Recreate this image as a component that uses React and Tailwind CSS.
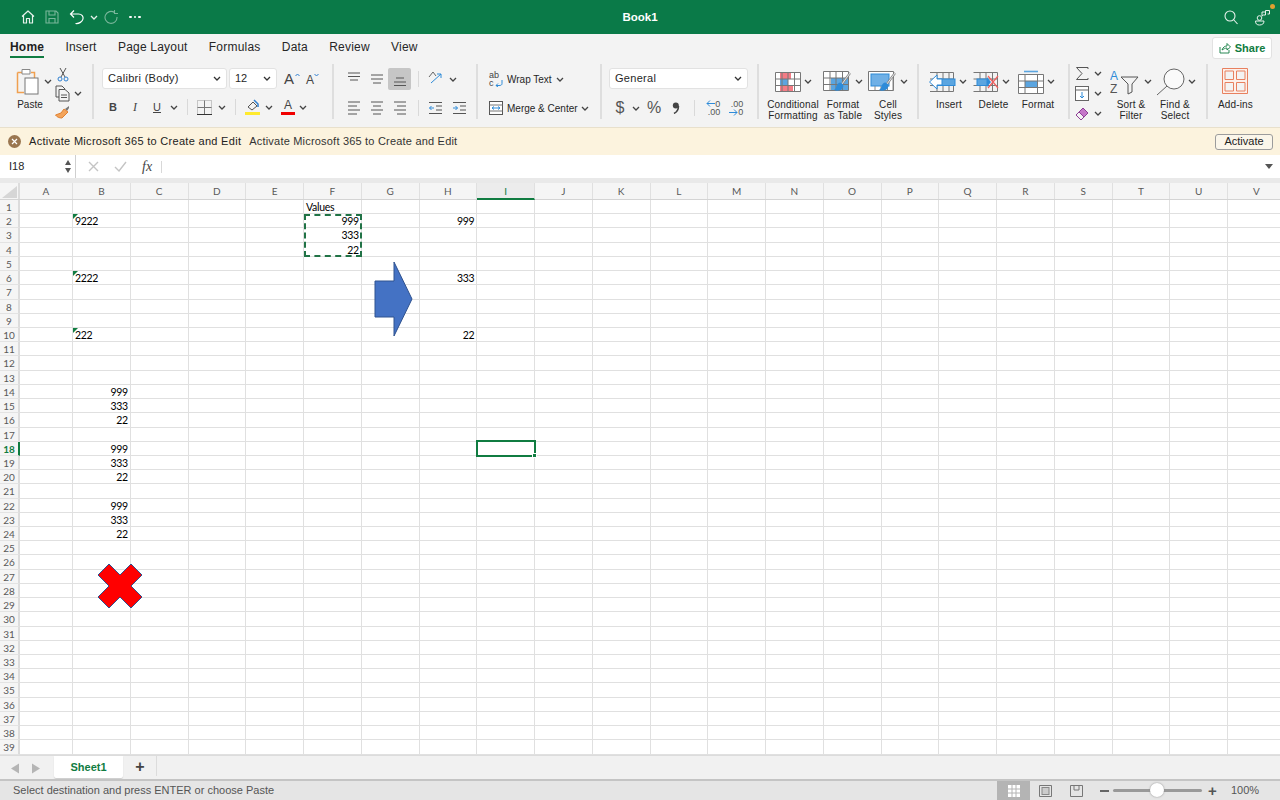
import React from 'react';

const Chev = ({ c = '#444' }) => (
  <svg width="8" height="5" viewBox="0 0 8 5" className="shrink-0"><path d="M1 1l3 3 3-3" fill="none" stroke={c} strokeWidth="1.3" /></svg>
);

const S = ({ w, h, children, className = '' }) => (
  <svg width={w} height={h} viewBox={`0 0 ${w} ${h}`} fill="none" className={`shrink-0 ${className}`}>{children}</svg>
);

const Sep = ({ h = 'h-[22px]' }) => <div className={`w-px ${h} bg-[#d9d9d9] shrink-0`} />;
const GroupSep = () => <div className="w-[2px] h-[55px] mt-[4px] bg-[#dedede] shrink-0" />;

const Lines = ({ kind }) => {
  const rows = {
    top: [[4, 16, 4], [4, 16, 7.5], [6, 14, 11]],
    mid: [[4, 16, 6], [4, 16, 10], [6, 14, 14]],
    bot: [[6, 14, 9], [4, 16, 13], [4, 16, 16.5]],
    left: [[4, 16, 4], [4, 13, 8], [4, 16, 12], [4, 13, 16]],
    center: [[4, 16, 4], [6, 14, 8], [4, 16, 12], [6, 14, 16]],
    right: [[4, 16, 4], [7, 16, 8], [4, 16, 12], [7, 16, 16]],
  }[kind];
  return <S w={20} h={20}>{rows.map((r, i) => <path key={i} d={`M${r[0]} ${r[2]}H${r[1]}`} stroke="#555" strokeWidth="1" />)}</S>;
};

const Big = ({ icon, l1, l2, w, shift = false }) => (
  <div className={`flex flex-col items-center shrink-0 ${w}`}>
    <div className={`h-[33px] flex items-center gap-[3px] ${shift ? 'pr-[4px]' : ''}`}>{icon}<Chev /></div>
    <div className="text-[10px] leading-[11px] text-center text-[#262626] tracking-[0.15px] mt-[1px] whitespace-nowrap">{l1}<br />{l2}</div>
  </div>
);

const TableGrid = ({ children, w = 26, h = 20 }) => (
  <S w={w} h={h}>
    <rect x="0.5" y="0.5" width={w - 1} height={h - 1} fill="#fff" />
    {children}
    <path d={`M0.5 0.5H${w - .5}V${h - .5}H0.5Z M0.5 7H${w - .5} M0.5 13.5H${w - .5} M7 0.5V${h - .5} M13 .5V${h - .5} M19.5 .5V${h - .5}`} stroke="#777" strokeWidth="1" />
  </S>
);

const Brush = () => (
  <g>
    <path d="M27 3L19 14" stroke="#888" strokeWidth="2.2" />
    <path d="M27 3L19 14" stroke="#fff" strokeWidth="0.8" />
    <path d="M18 13c3 1 3 4 1 6s-6 2-8 1c2-1 2-3 3-5s3-3 4-2z" fill="#2e8bd8" />
  </g>
);

const CondIcon = (
  <TableGrid>
    <rect x="5" y="1" width="11" height="6" fill="#f47c85" />
    <rect x="5" y="7" width="8" height="6" fill="#5ba5e0" />
    <rect x="5" y="13" width="13" height="6" fill="#f47c85" />
  </TableGrid>
);
const FmtTable = (
  <S w={29} h={24}>
    <g transform="translate(0,1)">
      <rect x="0.5" y="0.5" width="25" height="19" fill="#fff" />
      <rect x="8" y="7" width="17" height="12" fill="#5ba5e0" />
      <path d="M0.5 0.5H25.5V19.5H0.5Z M0.5 7H25.5 M0.5 13.5H25.5 M7 0.5V19.5 M13 .5V19.5 M19.5 .5V19.5" stroke="#777" />
    </g>
    <Brush />
  </S>
);
const CellStyles = (
  <S w={29} h={24}>
    <g transform="translate(0,1)">
      <rect x="0.5" y="0.5" width="25" height="19" fill="#fff" />
      <rect x="3" y="3" width="18" height="12" fill="#6fb0e6" stroke="#2e8bd8" />
      <path d="M0.5 0.5H25.5V19.5H0.5Z" stroke="#777" />
      <path d="M25 7V19 M7 15V19 M13 15V19 M19.5 15V19" stroke="#888" />
    </g>
    <Brush />
  </S>
);
const InsertIcon = (
  <S w={28} h={20}>
    <path d="M2 .5H25.5V19.5H2 M2 7H25.5 M2 13.5H25.5 M9 .5V19.5 M15 .5V19.5 M21 .5V19.5" stroke="#777" />
    <rect x="9" y="7" width="18" height="6.5" fill="#5ba5e0" stroke="#2e8bd8" />
    <path d="M9 3L1.5 10 9 17V13H14V7H9Z" fill="#fff" stroke="#2e8bd8" />
  </S>
);
const DeleteIcon = (
  <S w={26} h={20}>
    <path d="M.5 .5H24.5V19.5H.5 M.5 7H24.5 M.5 13.5H24.5 M7 .5V19.5 M13 .5V19.5 M19.5 .5V19.5" stroke="#777" />
    <rect x="4" y="7" width="10" height="6.5" fill="#5ba5e0" stroke="#2e8bd8" />
    <path d="M14 5L18 10 14 15Z" fill="#2e8bd8" />
    <path d="M15 4L25 16M25 4L15 16" stroke="#f0605f" strokeWidth="1.2" />
  </S>
);
const FormatIcon = (
  <S w={26} h={24}>
    <path d="M6 1.5H20" stroke="#5ba5e0" strokeWidth="1.6" />
    <g transform="translate(0,4)">
      <rect x=".5" y=".5" width="25" height="19" fill="#fff" />
      <rect x="7" y="7" width="13" height="6.5" fill="#5ba5e0" />
      <path d="M.5 .5H25.5V19.5H.5Z M.5 7H25.5 M.5 13.5H25.5 M7 .5V19.5 M19.5 .5V19.5" stroke="#777" />
    </g>
  </S>
);

const cols = 'ABCDEFGHIJKLMNOPQRSTUV'.split('');
const rows = Array.from({ length: 39 }, (_, i) => i + 1);
const data = {
  F1: ['Values', 'l'],
  B2: ['9222', 'l', true], F2: ['999', 'r'], H2: ['999', 'r'],
  F3: ['333', 'r'], F4: ['22', 'r'],
  B6: ['2222', 'l', true], H6: ['333', 'r'],
  B10: ['222', 'l', true], H10: ['22', 'r'],
  B14: ['999', 'r'], B15: ['333', 'r'], B16: ['22', 'r'],
  B18: ['999', 'r'], B19: ['333', 'r'], B20: ['22', 'r'],
  B22: ['999', 'r'], B23: ['333', 'r'], B24: ['22', 'r'],
};

function Cell({ col, row }) {
  const d = data[col + row];
  return (
    <div className={`relative shrink-0 h-full border-r border-b border-[#e0e0e0] ${col === 'A' ? 'w-[53px]' : 'w-[57.75px]'} ${d && d[1] === 'r' ? 'text-right pr-[2px]' : 'text-left pl-[2px]'} text-[10.5px] tracking-[-0.3px] leading-[14px] text-black`}>
      {d && d[2] && <span className="absolute left-0 top-0 w-0 h-0 border-t-[5px] border-r-[5px] border-t-[#107c41] border-r-transparent" />}
      {d && d[0]}
    </div>
  );
}

export default function App() {
  return (
    <div className="w-[1280px] h-[800px] overflow-hidden flex flex-col bg-white text-[#262626] font-['Liberation_Sans',Arial,sans-serif]">
      {/* Title bar */}
      <header className="h-[34px] shrink-0 bg-[#0a7a48] flex items-center text-white">
        <div className="flex-1 flex items-center pl-[20px]">
          <S w={16} h={16}><path d="M2 7.5L8 2l6 5.5M3.5 6.5V14H6.5V9.5H9.5V14H12.5V6.5" stroke="#e6f2ec" strokeWidth="1.2" strokeLinejoin="round" /></S>
          <S w={16} h={16} className="ml-[8px] opacity-50"><path d="M2 2H12L14 4V14H2Z M5 2V6H11V2 M5 14V9.5H11V14" stroke="#e6f2ec" strokeWidth="1.1" /></S>
          <S w={16} h={16} className="ml-[9px]"><path d="M5 1.5L1.5 5 5 8.5M1.5 5H9.5C13 5 14.5 7.5 14 10S10 15 6.5 14.5" stroke="#fff" strokeWidth="1.2" /></S>
          <div className="ml-[5px]"><Chev c="#e6f2ec" /></div>
          <S w={14} h={14} className="ml-[6px] opacity-50"><path d="M10.5 2.5A6 6 0 1 0 13 7 M10.5 0V3.5H14" stroke="#e6f2ec" strokeWidth="1.1" /></S>
          <div className="ml-[11px] flex gap-[2px]"><i className="w-[2.5px] h-[2.5px] rounded-full bg-white" /><i className="w-[2.5px] h-[2.5px] rounded-full bg-white" /><i className="w-[2.5px] h-[2.5px] rounded-full bg-white" /></div>
        </div>
        <div className="text-[11.5px] font-bold mt-[1px]">Book1</div>
        <div className="flex-1 flex items-center justify-end pl-[10px] pr-[10px] gap-[17px] relative">
          <S w={14} h={15}><circle cx="6" cy="6" r="5" stroke="#e6f2ec" strokeWidth="1.1" /><path d="M9.5 9.5L13.5 14" stroke="#e6f2ec" strokeWidth="1.1" /></S>
          <S w={15} h={17} className="mt-[1px]"><circle cx="4.5" cy="9" r="2.3" stroke="#e6f2ec" /><path d="M.5 12H9C9 15 7 16 4.5 16S.5 15 .5 12Z M7 7V3H10.5V6H8.5Z M10.5 4.5V1.5H14.5V5H12.5" stroke="#e6f2ec" strokeWidth="1" /></S>
          <span className="absolute right-[5px] -top-[4px] w-[5px] h-[5px] rounded-full bg-[#e0a030]" />
        </div>
      </header>

      {/* Ribbon */}
      <div className="h-[93px] shrink-0 bg-[#f3f3f3] flex flex-col">
        <div className="h-[26px] flex pl-[10px] relative">
          <nav className="flex gap-[21.3px] text-[12px] tracking-[0.2px] pt-[4px]">
            <div className="relative font-bold text-[#1f1f1f] h-[20px] border-b-[2px] border-[#107c41]">Home</div>
            <div>Insert</div><div>Page Layout</div><div>Formulas</div><div>Data</div><div>Review</div><div>View</div>
          </nav>
          <div className="ml-auto mr-[8px] mt-[3px] w-[60px] h-[22px] bg-white rounded-[3px] border border-[#e2e2e2] flex items-center justify-center gap-[4px] text-[#107c41] text-[11px] font-bold">
            <S w={12} h={12}><path d="M1 5V11H10V8 M3 8C4 5 6 4 8 4V1.5L11.5 5 8 8V6C6 6 5 7 3 8Z" stroke="#107c41" strokeWidth="0.9" /></S>
            Share
          </div>
        </div>

        <div className="flex-1 flex items-start pl-[11px]">
          {/* Clipboard */}
          <div className="w-[81px] shrink-0 flex pt-[6px]">
            <div className="w-[40px] flex flex-col items-center">
              <div className="flex items-center gap-[3px] h-[30px] ml-[4px]">
                <S w={27} h={28}>
                  <path d="M3.5 5.5H8M17 5.5H20.5V12M3.5 5.5V25.5H10" stroke="#f0a050" strokeWidth="1.5" />
                  <path d="M8 2.5H16V7H8Z" fill="#fff" stroke="#888" />
                  <rect x="11" y="11" width="13" height="16" fill="#fff" stroke="#777" />
                </S>
                <Chev />
              </div>
              <div className="text-[10px] mt-[1px] -ml-[2px]">Paste</div>
            </div>
            <div className="ml-[4px] flex flex-col gap-[3px] pt-[1px]">
              <S w={12} h={15} className="ml-[2px]"><path d="M3 1L8 10M9 1L4 10" stroke="#555" /><circle cx="3" cy="12" r="2" stroke="#2e7fd0" /><circle cx="9" cy="12" r="2" stroke="#2e7fd0" /></S>
              <div className="flex items-center gap-[4px]">
                <S w={15} h={17}><path d="M4 12H1V1H7L10 4" stroke="#555" /><path d="M4 4.5H10L14 8V16H4Z M6 10H12M6 12.5H12" stroke="#555" fill="#f3f3f3" /></S>
                <Chev />
              </div>
              <S w={15} h={14}><path d="M14 1L10 4 12 6 14 3Z" fill="#777" /><path d="M9 4L13 7 7 13C4 13 2 12 .5 10L6 8Z" fill="#f3a45b" stroke="#e08030" /></S>
            </div>
          </div>
          <GroupSep />

          {/* Font */}
          <div className="w-[238px] shrink-0 pl-[8px] pt-[8px] flex flex-col">
            <div className="flex items-center">
              <div className="w-[125px] h-[21px] bg-white rounded-[3px] border border-[#e2e2e2] flex items-center justify-between px-[5px] text-[11px] tracking-[0.3px]">Calibri (Body)<Chev c="#333" /></div>
              <div className="w-[48px] h-[21px] ml-[2px] bg-white rounded-[3px] border border-[#e2e2e2] flex items-center justify-between px-[5px] text-[11px]">12<Chev c="#333" /></div>
              <div className="ml-[7px] text-[15px] w-[11px] text-[#444] leading-none">A</div>
              <S w={5} h={4} className="-mt-[8px]"><path d="M.5 3L2.5 1 4.5 3" stroke="#2e7fd0" /></S>
              <div className="ml-[6px] text-[12px] text-[#444] mt-[2px] leading-none">A</div>
              <S w={5} h={4} className="-mt-[8px]"><path d="M.5 1L2.5 3 4.5 1" stroke="#2e7fd0" /></S>
            </div>
            <div className="flex items-center h-[22px] mt-[7px] text-[11px] text-[#444]">
              <div className="w-[22px] text-center font-bold">B</div>
              <div className="w-[22px] text-center italic font-['Liberation_Serif',serif] text-[12px]">I</div>
              <div className="w-[22px] text-center underline">U</div>
              <div className="ml-[2px]"><Chev /></div>
              <div className="ml-[9px]"><Sep h="h-[16px]" /></div>
              <S w={15} h={15} className="ml-[9px]"><path d="M.5.5H14.5V14.5H.5Z" stroke="#999" strokeDasharray="1 1" /><path d="M.5 7.5H14.5M7.5.5V14.5" stroke="#777" /><path d="M0 14.5H15" stroke="#333" /></S>
              <div className="ml-[6px]"><Chev /></div>
              <div className="ml-[9px]"><Sep h="h-[16px]" /></div>
              <S w={15} h={16} className="ml-[9px]"><path d="M3 8L8 3 12 7 7 11Z" stroke="#555" /><path d="M9 1L13 5V8" stroke="#2e7fd0" strokeWidth="1.5" /><rect x="0" y="13" width="15" height="3" fill="#ffea2e" /></S>
              <div className="ml-[5px]"><Chev /></div>
              <div className="ml-[8px] w-[14px] h-[16px] relative text-center text-[12px] leading-[12px]">A<span className="absolute left-0 right-0 bottom-0 h-[3px] bg-[#f00000]" /></div>
              <div className="ml-[4px]"><Chev /></div>
            </div>
          </div>
          <GroupSep />

          {/* Alignment */}
          <div className="w-[142px] shrink-0 pt-[8px] pl-[8px] flex flex-col">
            <div className="flex items-center h-[22px]">
              <div className="w-[23px] flex justify-center"><Lines kind="top" /></div>
              <div className="w-[23px] flex justify-center"><Lines kind="mid" /></div>
              <div className="w-[23px] h-[22px] flex justify-center items-center bg-[#c6c6c6] rounded-[2px]"><Lines kind="bot" /></div>
              <div className="ml-[7px]"><Sep h="h-[16px]" /></div>
              <S w={16} h={16} className="ml-[9px]"><path d="M3 12L13 3M13 3H9M13 3V7" stroke="#2e8bd8" strokeWidth="1" /><path d="M1 6L5 1 8 5" stroke="#666" /></S>
              <div className="ml-[5px]"><Chev /></div>
            </div>
            <div className="flex items-center h-[22px] mt-[7px]">
              <div className="w-[23px] flex justify-center"><Lines kind="left" /></div>
              <div className="w-[23px] flex justify-center"><Lines kind="center" /></div>
              <div className="w-[23px] flex justify-center"><Lines kind="right" /></div>
              <div className="ml-[7px]"><Sep h="h-[16px]" /></div>
              <S w={15} h={14} className="ml-[9px]"><path d="M1 1.5H14M8 5H14M8 9H14M1 12.5H14" stroke="#555" /><path d="M6 7H1.5M3.5 5L1.5 7 3.5 9" stroke="#2e8bd8" /></S>
              <S w={15} h={14} className="ml-[9px]"><path d="M1 1.5H14M8 5H14M8 9H14M1 12.5H14" stroke="#555" /><path d="M1 7H5.5M3.5 5L5.5 7 3.5 9" stroke="#2e8bd8" /></S>
            </div>
          </div>
          <GroupSep />

          {/* Wrap */}
          <div className="w-[122px] shrink-0 pt-[8px] pl-[11px] flex flex-col text-[10px]">
            <div className="flex items-center h-[22px]">
              <div className="relative w-[14px] h-[16px] text-[9px] leading-[8px] text-[#444]">
                ab<br />c
                <S w={8} h={7} className="absolute right-0 bottom-0"><path d="M7 0V3.5C7 5 6 5.5 4 5.5H1M3 3.5L1 5.5 3 7" stroke="#2e8bd8" /></S>
              </div>
              <span className="ml-[4px]">Wrap Text</span>
              <div className="ml-[4px]"><Chev /></div>
            </div>
            <div className="flex items-center h-[22px] mt-[7px]">
              <S w={14} h={14}><rect x=".5" y=".5" width="13" height="13" fill="#fff" stroke="#555" /><path d="M.5 4H13.5M.5 10H13.5" stroke="#777" /><path d="M3 7H11M5 5.5L3 7 5 8.5M9 5.5L11 7 9 8.5" stroke="#2e8bd8" /></S>
              <span className="ml-[4px]">Merge &amp; Center</span>
              <div className="ml-[3px]"><Chev /></div>
            </div>
          </div>
          <GroupSep />

          {/* Number */}
          <div className="w-[155px] shrink-0 pt-[8px] pl-[7px] flex flex-col">
            <div className="w-[139px] h-[21px] bg-white rounded-[3px] border border-[#e2e2e2] flex items-center justify-between px-[5px] text-[11px] tracking-[0.3px]">General<Chev c="#333" /></div>
            <div className="flex items-center h-[22px] mt-[8px] text-[#555]">
              <div className="ml-[6px] text-[16px] w-[10px] text-center leading-none">$</div>
              <div className="ml-[7px]"><Chev /></div>
              <div className="ml-[7px] text-[16px] leading-none">%</div>
              <S w={8} h={12} className="ml-[11px]"><circle cx="3.8" cy="3.5" r="3" fill="#444" /><path d="M6.5 4C6.5 7.5 5 10 2 11.5" stroke="#444" strokeWidth="1.5" /></S>
              <div className="ml-[14px]"><Sep h="h-[16px]" /></div>
              <div className="ml-[11px] w-[14px] text-[9px] leading-[8px] text-right relative">0<br />.00<S w={9} h={7} className="absolute left-0 top-0"><path d="M9 3.5H1M4 .5L1 3.5 4 6.5" stroke="#2e8bd8" /></S></div>
              <div className="ml-[9px] w-[14px] text-[9px] leading-[8px] text-right relative">.00<br />0<S w={9} h={7} className="absolute left-0 bottom-0"><path d="M0 3.5H8M5 .5L8 3.5 5 6.5" stroke="#2e8bd8" /></S></div>
            </div>
          </div>
          <GroupSep />

          {/* Styles */}
          <div className="w-[158px] shrink-0 pl-[8px] flex pt-[5px] gap-[2px]">
            <Big icon={CondIcon} l1="Conditional" l2="Formatting" w="w-[52px]" />
            <Big icon={FmtTable} l1="Format" l2="as Table" w="w-[44px]" />
            <Big icon={CellStyles} l1="Cell" l2="Styles" w="w-[42px]" />
          </div>
          <GroupSep />

          {/* Cells */}
          <div className="w-[149px] shrink-0 pl-[10px] flex pt-[5px] gap-[5px]">
            <Big shift icon={InsertIcon} l1="Insert" l2=" " w="w-[40px]" />
            <Big shift icon={DeleteIcon} l1="Delete" l2=" " w="w-[39px]" />
            <Big shift icon={FormatIcon} l1="Format" l2=" " w="w-[40px]" />
          </div>
          <GroupSep />

          {/* Editing */}
          <div className="w-[136px] shrink-0 pl-[5px] flex pt-[5px]">
            <div className="flex flex-col gap-[3px] w-[30px]">
              <div className="flex items-center gap-[5px] h-[17px]">
                <S w={14} h={15}><path d="M13 3V1.5H1.5L7 7.5 1.5 13.5H13V12" stroke="#555" /></S><Chev />
              </div>
              <div className="flex items-center gap-[5px] h-[17px]">
                <S w={14} h={15}><rect x=".5" y=".5" width="13" height="14" fill="#fff" stroke="#666" /><path d="M.5 4H13.5" stroke="#666" /><path d="M7 6V12M5 10L7 12 9 10" stroke="#2e8bd8" /></S><Chev />
              </div>
              <div className="flex items-center gap-[5px] h-[17px]">
                <S w={14} h={14}><path d="M1 8L8 1 13 6 6 13Z" fill="#c576c9" stroke="#8f3f96" /><path d="M1 8L4 5 9 10 6 13Z" fill="#f3f3f3" stroke="#8f3f96" /></S><Chev />
              </div>
            </div>
            <Big w="w-[46px] ml-[3px]" l1="Sort &" l2="Filter" icon={
              <S w={31} h={26}>
                <text x="0" y="11" fontSize="12" fill="#2e8bd8" fontFamily="Liberation Sans">A</text>
                <text x="0" y="24" fontSize="12" fill="#555" fontFamily="Liberation Sans">Z</text>
                <path d="M11 8H28L22 15V23L18 25V15Z" stroke="#555" />
              </S>
            } />
            <Big w="w-[42px]" l1="Find &" l2="Select" icon={
              <S w={30} h={28}>
                <circle cx="19" cy="11" r="10" fill="#fafafa" stroke="#666" />
                <path d="M12 18L2 27" stroke="#666" />
              </S>
            } />
          </div>
          <GroupSep />

          {/* Add-ins */}
          <div className="pl-[10px] flex flex-col items-center pt-[8px]">
            <S w={26} h={26}>
              <path d="M.5.5H25.5V25.5H.5Z" fill="#fdf0ea" stroke="#e8805f" />
              <path d="M3 3H11.5V11.5H3Z M14.5 3H23V11.5H14.5Z M3 14.5H11.5V23H3Z M14.5 14.5H23V23H14.5Z" fill="#f3f3f3" stroke="#e8805f" />
            </S>
            <div className="text-[10px] mt-[3px] tracking-[0.15px]">Add-ins</div>
          </div>
        </div>
      </div>

      {/* Banner */}
      <div className="h-[28px] shrink-0 bg-[#fcf3de] flex items-center pl-[8px] pr-[7px] text-[11px] text-[#222] border-t border-[#e8e0cc]">
        <S w={13} h={13}><circle cx="6.5" cy="6.5" r="6.5" fill="#9a7650" /><path d="M4 4L9 9M9 4L4 9" stroke="#fff" strokeWidth="1.2" /></S>
        <span className="ml-[8px] tracking-[0.3px]">Activate Microsoft 365 to Create and Edit</span>
        <span className="ml-[8px] tracking-[0.2px] text-[#333]">Activate Microsoft 365 to Create and Edit</span>
        <div className="ml-auto w-[58px] h-[16px] border border-[#9c9c9c] rounded-[3px] bg-[#fbf6ea] flex items-center justify-center">Activate</div>
      </div>

      {/* Formula bar */}
      <div className="h-[28px] shrink-0 bg-[#e9e9e9] flex flex-col">
        <div className="h-[23px] bg-white flex items-center relative">
          <div className="w-[76px] h-full border-r border-[#cfcfcf] bg-white flex items-center justify-between pl-[9px] pr-[3px] text-[11px]">
            I18
            <S w={8} h={15}><path d="M4 1L7 6H1Z" fill="#555" /><path d="M4 14L7 9H1Z" fill="#555" /></S>
          </div>
          <S w={11} h={11} className="ml-[12px]"><path d="M1 1L10 10M10 1L1 10" stroke="#c4c4c4" strokeWidth="1.4" /></S>
          <S w={13} h={11} className="ml-[15px]"><path d="M1 6L5 10 12 1" stroke="#c4c4c4" strokeWidth="1.4" /></S>
          <div className="ml-[15px] w-[19px] text-[14px] italic font-['Liberation_Serif',serif] text-[#444]">fx</div>
          <div className="w-px h-[12px] bg-[#d8d8d8]" />
          <S w={8} h={5} className="ml-auto mr-[7px]"><path d="M0 0H8L4 5Z" fill="#555" /></S>
        </div>
      </div>

      {/* Sheet */}
      <main className="h-[572px] shrink-0 relative overflow-hidden bg-white font-['Lato','Liberation_Sans',sans-serif]">
        <div className="flex h-[17px] bg-[#f5f5f5] border-b border-[#d4d4d4] text-[10px] leading-[16px] text-[#595959] text-center">
          <div className="w-[20px] shrink-0 border-r-2 border-[#dcdcdc] relative overflow-hidden">
            <span className="absolute right-[1px] bottom-[1px] w-0 h-0 border-l-[15px] border-b-[12px] border-l-transparent border-b-[#d6d6d6]" />
          </div>
          {cols.map((c) => (
            <div key={c} className={`shrink-0 border-r border-[#e0e0e0] ${c === 'A' ? 'w-[53px]' : 'w-[57.75px]'} ${c === 'I' ? 'bg-[#ececec] border-b-2 border-b-[#107c41] h-[17px] text-[#107c41]' : ''}`}>{c}</div>
          ))}
        </div>
        {rows.map((r) => (
          <div key={r} className="flex h-[14.23px]">
            <div className={`w-[20px] shrink-0 h-full bg-[#f5f5f5] border-r-2 border-b border-b-[#e3e3e3] text-[10px] leading-[14px] text-center ${r === 18 ? 'border-r-[#107c41] text-[#107c41] font-bold' : 'border-r-[#dcdcdc] text-[#595959]'}`}>{r}</div>
            {cols.map((c) => <Cell key={c} col={c} row={r} />)}
          </div>
        ))}

        {/* Overlays */}
        <div className="absolute left-[304px] top-[31px] w-[58px] h-[43px] border-2 border-dashed border-[#217346]" />
        <div className="absolute left-[476px] top-[257px] w-[60px] h-[17px] border-2 border-[#107c41]">
          <span className="absolute -right-[3px] -bottom-[3px] w-[5px] h-[5px] bg-[#107c41] border border-white" />
        </div>
        <svg className="absolute left-[374px] top-[78px]" width="40" height="76" viewBox="0 0 40 76">
          <path d="M1 20H20V1L38 38 20 75V56H1Z" fill="#4472c4" stroke="#2f528f" />
        </svg>
        <svg className="absolute left-[97px] top-[380px]" width="46" height="46" viewBox="0 0 46 46">
          <path d="M12 1L23 12 34 1 45 12 34 23 45 34 34 45 23 34 12 45 1 34 12 23 1 12Z" fill="#ff0000" stroke="#2f528f" />
        </svg>
      </main>

      {/* Tabs */}
      <div className="h-[24px] shrink-0 bg-[#f1f1f1] border-t border-[#dcdcdc] flex items-start">
        <S w={10} h={11} className="ml-[10px] mt-[7px]"><path d="M9 .5V10.5L1 5.5Z" fill="#b5b5b5" /></S>
        <S w={10} h={11} className="ml-[11px] mt-[7px]"><path d="M1 .5V10.5L9 5.5Z" fill="#b5b5b5" /></S>
        <div className="ml-[13px] w-[69px] h-[22px] bg-white rounded-b-[2px] shadow-[0_1px_1px_#ccc] text-[#107c41] font-bold text-[11px] flex items-center justify-center">Sheet1</div>
        <div className="ml-[13px] mt-[1px] w-[8px] relative h-[20px] text-[#444] text-[16px] font-bold leading-[20px] flex items-center justify-center">+</div>
        <div className="ml-[12px] w-px h-[20px] bg-[#dcdcdc]" />
      </div>

      {/* Status */}
      <footer className="h-[21px] shrink-0 bg-[#e5e5e5] border-t-2 border-[#c4c4c4] flex items-center pl-[13px] text-[11px] text-[#555]">
        <span>Select destination and press ENTER or choose Paste</span>
        <div className="ml-auto h-full w-[33px] bg-[#b4b4b4] flex items-center justify-center">
          <S w={12} h={12}><path d="M0 0H12V12H0Z" fill="#fff" /><path d="M0 4H12M0 8H12M4 0V12M8 0V12" stroke="#b4b4b4" /></S>
        </div>
        <S w={13} h={12} className="ml-[9px]"><path d="M.5.5H12.5V11.5H.5Z" stroke="#777" /><rect x="3" y="2.5" width="7" height="7" fill="#ccc" stroke="#888" /></S>
        <S w={13} h={12} className="ml-[18px]"><path d="M.5 11.5V.5H12.5V11.5Z M4 .5V5H9V.5" stroke="#777" /></S>
        <div className="ml-[17px] w-[9px] h-[2px] bg-[#666]" />
        <div className="ml-[4px] w-[89px] h-[3px] rounded bg-[#999] relative">
          <span className="absolute left-[37px] -top-[6px] w-[14px] h-[14px] rounded-full bg-white shadow-[0_0_2px_#888]" />
        </div>
        <div className="ml-[6px] text-[#555] text-[15px] font-bold leading-none w-[9px]">+</div>
        <div className="ml-[14px] mr-[21px] w-[28px] text-right">100%</div>
      </footer>
    </div>
  );
}
